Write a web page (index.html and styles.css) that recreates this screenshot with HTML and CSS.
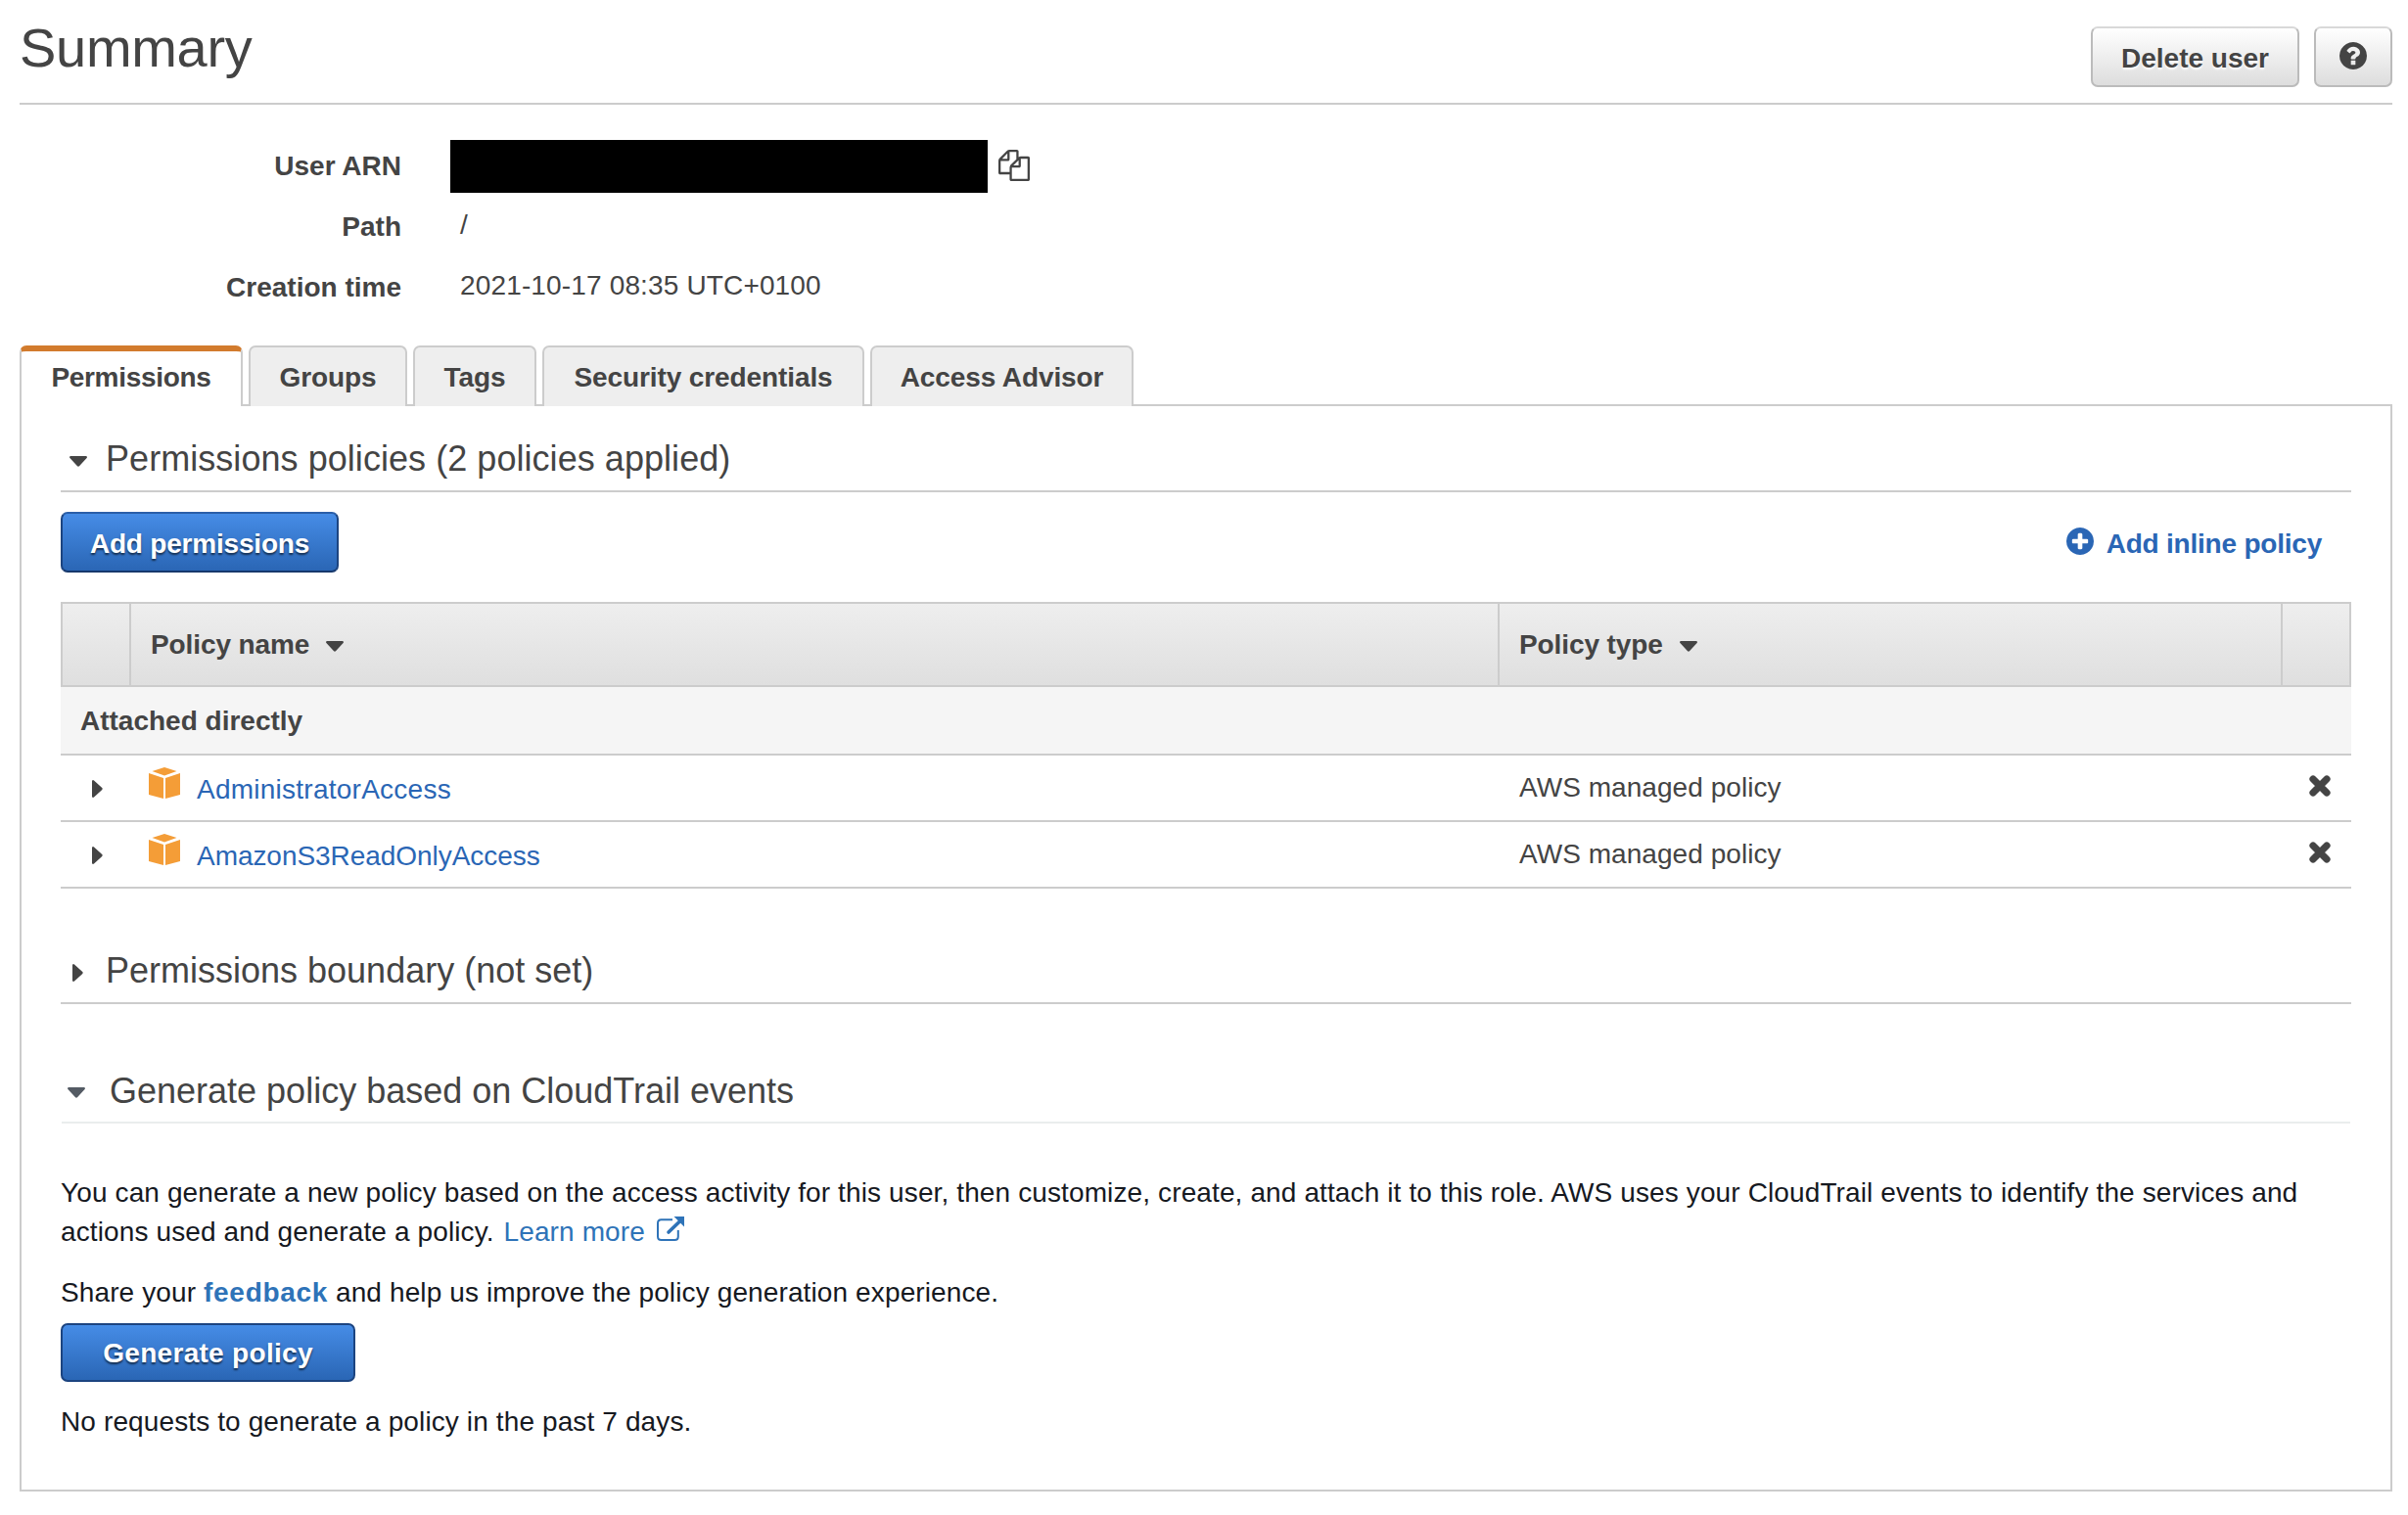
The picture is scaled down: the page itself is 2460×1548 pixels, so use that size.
FILE: index.html
```html
<!DOCTYPE html>
<html lang="en">
<head>
    <meta charset="UTF-8" />
    <title>Summary</title>
    <link rel="stylesheet" href="styles.css">
</head>
<body>
    <!-- shared icons -->
    <svg class="defs">
        <symbol id="caret-down" viewBox="0 0 18 11"><path d="M1 0h16q1.600.6.6 2L10.200 10q-1.200 1.400-2.400 0L.4 2Q-.6.6 1 0z"/></symbol>
        <symbol id="caret-right" viewBox="0 0 11 18"><path d="M0 1v16q.6 1.600 2 .6L10 10.200q1.400-1.200 0-2.400L2 .4Q.6-.6 0 1z"/></symbol>
        <symbol id="cube" viewBox="0 0 32 32">
            <path d="M3.500 4L16 0l12.500 4L16 8.500z"/>
            <path d="M0 6l15 5V32L0 28z"/>
            <path d="M32 6l-15 5V32l15-4z"/>
        </symbol>
        <symbol id="times" viewBox="0 0 22 22"><path d="M4 4l14 14M18 4L4 18" fill="none" stroke="currentColor" stroke-width="7.200" stroke-linecap="round"/></symbol>
    </svg>

    <div class="header">
        <h1>Summary</h1>
        <button class="btn delete">Delete user</button>
        <button class="btn help">
            <svg class="icon-circle" viewBox="0 0 1536 1536"><path d="M896 1248v-192q0-14-9-23t-23-9h-192q-14 0-23 9t-9 23v192q0 14 9 23t23 9h192q14 0 23-9t9-23zm256-672q0-88-55.500-163t-138.500-116-170-41q-243 0-371 213-15 24 8 42l132 100q7 6 19 6 16 0 25-12 53-68 86-92 34-24 86-24 48 0 85.500 26t37.500 59q0 38-20 61t-68 45q-63 28-115.500 86.500t-52.500 125.500v36q0 14 9 23t23 9h192q14 0 23-9t9-23q0-19 21.500-49.500t54.500-49.500q32-18 49-28.500t46-35 44.500-48 28-60.500 12.500-81zm384 192q0 209-103 385.500t-279.500 279.500-385.500 103-385.500-103-279.500-279.500-103-385.500 103-385.500 279.500-279.500 385.500-103 385.500 103 279.500 279.500 103 385.500z"/></svg>
        </button>
    </div>

    <dl class="details">
        <dt>User ARN</dt>
        <dd>
            <span class="redacted"></span>
            <svg class="copy" viewBox="0 0 1792 1792"><path d="M1696 384q40 0 68 28t28 68v1216q0 40-28 68t-68 28h-960q-40 0-68-28t-28-68v-288h-544q-40 0-68-28t-28-68v-672q0-40 20-88t48-76l408-408q28-28 76-48t88-20h416q40 0 68 28t28 68v328q68-40 128-40h416zm-544 213l-299 299h299v-299zm-640-384l-299 299h299v-299zm196 647l316-316v-416h-384v416q0 40-28 68t-68 28h-416v640h512v-256q0-40 20-88t48-76zm956 804v-1152h-384v416q0 40-28 68t-68 28h-416v640h896z"/></svg>
        </dd>
        <dt>Path</dt>
        <dd>/</dd>
        <dt>Creation time</dt>
        <dd>2021-10-17 08:35 UTC+0100</dd>
    </dl>

    <ul class="tabs">
        <li class="active"><a>Permissions</a></li>
        <li><a>Groups</a></li>
        <li><a>Tags</a></li>
        <li><a>Security credentials</a></li>
        <li><a>Access Advisor</a></li>
    </ul>

    <div class="panel">
        <h2>
            <span class="toggle"><svg class="down"><use href="#caret-down"/></svg></span>
            <span>Permissions policies (2 policies applied)</span>
        </h2>
        <div class="actions">
            <button class="btn primary add">Add permissions</button>
            <a class="inline-policy">
                <svg class="icon-circle" viewBox="0 0 1536 1536"><path d="M1216 832v-128q0-26-19-45t-45-19h-256v-256q0-26-19-45t-45-19h-128q-26 0-45 19t-19 45v256h-256q-26 0-45 19t-19 45v128q0 26 19 45t45 19h256v256q0 26 19 45t45 19h128q26 0 45-19t19-45v-256h256q26 0 45-19t19-45zm320-64q0 209-103 385.500t-279.500 279.500-385.500 103-385.500-103-279.500-279.500-103-385.500 103-385.500 279.500-279.500 385.500-103 385.500 103 279.500 279.500 103 385.500z"/></svg>
                <span>Add inline policy</span>
            </a>
        </div>

        <div class="table">
            <div class="row head">
                <div></div>
                <div><span>Policy name</span><svg class="down"><use href="#caret-down"/></svg></div>
                <div><span>Policy type</span><svg class="down"><use href="#caret-down"/></svg></div>
                <div></div>
            </div>
            <div class="group">Attached directly</div>
            <div class="row">
                <div class="expand"><svg class="right"><use href="#caret-right"/></svg></div>
                <div class="name"><svg class="cube"><use href="#cube"/></svg><a class="wide">AdministratorAccess</a></div>
                <div class="type">AWS managed policy</div>
                <div class="remove"><svg class="times"><use href="#times"/></svg></div>
            </div>
            <div class="row">
                <div class="expand"><svg class="right"><use href="#caret-right"/></svg></div>
                <div class="name"><svg class="cube"><use href="#cube"/></svg><a>AmazonS3ReadOnlyAccess</a></div>
                <div class="type">AWS managed policy</div>
                <div class="remove"><svg class="times"><use href="#times"/></svg></div>
            </div>
        </div>

        <h2 class="boundary">
            <span class="toggle"><svg class="right"><use href="#caret-right"/></svg></span>
            <span>Permissions boundary (not set)</span>
        </h2>

        <h2 class="generate">
            <span class="toggle"><svg class="down"><use href="#caret-down"/></svg></span>
            <span>Generate policy based on CloudTrail events</span>
        </h2>
        <div class="cloudtrail">
            <p>You can generate a new policy based on the access activity for this user, then customize, create, and attach it to this role. AWS uses your CloudTrail events to identify the services and<br>
            actions used and generate a policy. <a>Learn more</a><svg class="external" viewBox="0 0 30 26"><path d="M17 4.200H5.500Q2 4.200 2 7.700v13.800Q2 25 5.500 25h13.800q3.500 0 3.500-3.500V15" fill="none" stroke="currentColor" stroke-width="2"/><path d="M13 17L25 5.500" stroke="currentColor" stroke-width="3.600" stroke-linecap="round"/><path d="M18.500 1H29v10.500L25.500 8 22 4.500z"/></svg></p>
            <p class="share">Share your <b>feedback</b> and help us improve the policy generation experience.</p>
            <button class="btn primary gen">Generate policy</button>
            <p class="empty">No requests to generate a policy in the past 7 days.</p>
        </div>
    </div>
</body>
</html>
```
FILE: styles.css
```css
* {
    box-sizing: border-box;
    margin: 0;
    padding: 0;
}

body {
    padding: 0 16px 0 20px;
    background-color: #fff;
    color: #444;
    font: 28px/40px "Liberation Sans", Arial, sans-serif;
}

svg {
    display: block;
    flex: none;
    fill: currentColor;
}

.defs {
    display: none;
}

/* carets */
.down {
    width: 18px;
    height: 11px;
}

.right {
    width: 11px;
    height: 18px;
}

/* header */
.header {
    display: flex;
    align-items: flex-start;
    height: 107px;
    padding-top: 27px;
    border-bottom: 2px solid #ccc;
}

h1 {
    flex: 1;
    margin-top: -10px;
    font-size: 56px;
    font-weight: normal;
    letter-spacing: -.3px;
    line-height: 64px;
}

.btn {
    display: flex;
    align-items: center;
    justify-content: center;
    height: 62px;
    border: 2px solid #bbb;
    border-top-color: #d9d9d9;
    border-radius: 7px;
    background: linear-gradient(#fff, #ddd);
    color: #444;
    font: bold 28px/40px "Liberation Sans", Arial, sans-serif;
    text-shadow: 0 2px 2px #fff;
}

.delete {
    width: 213px;
    margin-right: 15px;
    padding-top: 3px;
}

.help {
    width: 80px;
}

.icon-circle {
    width: 28px;
    height: 28px;
}

.help .icon-circle {
    margin-bottom: 2px;
}

/* user details */
.details {
    display: grid;
    grid-template-columns: 390px 1fr;
    grid-auto-rows: 62px;
    column-gap: 60px;
    align-items: center;
    margin-top: 32px;
}

dt {
    padding-bottom: 1px;
    font-weight: bold;
    text-align: right;
}

dd {
    padding-bottom: 4px;
    letter-spacing: .15px;
}

dd:first-of-type {
    display: flex;
    align-items: center;
    gap: 11px;
    margin-left: -10px;
    padding: 0;
}

.redacted {
    width: 549px;
    height: 54px;
    background-color: #000;
}

.copy {
    width: 32px;
    height: 32px;
    margin-bottom: 2px;
}

/* tabs */
.tabs {
    display: grid;
    grid-template-columns: 228px 162px 126px 329px 269px;
    column-gap: 6px;
    height: 60px;
    margin-top: 28px;
    list-style: none;
}

.tabs li {
    padding-top: 11px;
    border: 2px solid #ccc;
    border-bottom: none;
    border-radius: 7px 7px 0 0;
    background-color: #eee;
    font-weight: bold;
    letter-spacing: -.1px;
    text-align: center;
}

.tabs .active {
    height: 62px;                 /* covers the top border of the panel */
    padding-top: 7px;
    border-top: 6px solid #d27b2d;
    background-color: #fff;
    letter-spacing: -.3px;
    z-index: 1;
}

.panel {
    height: 1111px;
    padding: 32px 40px 0;
    border: 2px solid #ccc;
}

h2 {
    display: flex;
    align-items: center;
    height: 56px;
    padding-bottom: 10px;
    border-bottom: 2px solid #ccc;
    font-size: 36px;
    font-weight: normal;
    letter-spacing: .05px;
    line-height: 44px;
}

.toggle {
    width: 46px;
    padding: 4px 0 0 9px;
}

.actions {
    display: flex;
    justify-content: space-between;
    margin: 20px 30px 30px 0;
}

.primary {
    border-color: #2a5ea8 #1c4480 #16386c;
    background: linear-gradient(#468ce6, #2a66b5);
    color: #fff;
    text-shadow: 0 2px 2px rgba(0, 0, 0, .6);
}

.add {
    width: 284px;
    padding-top: 3px;
    letter-spacing: -.2px;
}

.inline-policy {
    display: flex;
    align-items: center;
    gap: 13px;
    color: #2a66b5;
    font-weight: bold;
    letter-spacing: -.22px;
}

.inline-policy .icon-circle {
    margin-bottom: 2px;
}

.inline-policy span {
    padding-top: 3px;
}

/* policies table */
.row {
    display: grid;
    grid-template-columns: 70px 1398px 800px 72px;
    height: 68px;
    border-bottom: 2px solid #ccc;
}

.head {
    height: 87px;
    border: 2px solid #ccc;
    background: linear-gradient(#eee, #dfdfdf);
    font-weight: bold;
    letter-spacing: -.1px;
    grid-template-columns: 68px 1398px 800px 70px;
}

.head div {
    display: flex;
    align-items: center;
    gap: 17px;
    padding: 1px 0 0 20px;
    border-left: 2px solid #ccc;
}

.head div:first-child {
    border: none;
}

.head .down {
    margin-top: 3px;
}

.group {
    height: 70px;
    padding: 15px 0 0 20px;
    border-bottom: 2px solid #ccc;
    background-color: #f5f5f5;
    font-weight: bold;
}

.expand {
    padding: 25px 0 0 32px;
}

.name {
    display: flex;
    gap: 17px;
    padding: 12px 0 0 20px;
}

.name a {
    padding-top: 3px;
    color: #2a66b5;
    letter-spacing: -.05px;
}

.name .wide {
    letter-spacing: .25px;
}

.cube {
    width: 32px;
    height: 32px;
    color: #f49d37;
}

.type {
    padding: 13px 0 0 22px;
    letter-spacing: .05px;
}

.times {
    width: 22px;
    height: 22px;
    margin: 20px 0 0 29px;
}

.boundary {
    margin-top: 62px;
    letter-spacing: 0;
}

.boundary .toggle {
    padding-left: 12px;
}

.generate {
    margin: 66px 1px 0;
    padding-bottom: 8px;
    border-color: #eaeded;
    letter-spacing: 0;
}

.generate .toggle {
    width: 49px;
    padding: 3px 0 0 6px;
    color: #545b64;
}

.cloudtrail {
    padding-top: 51px;
    color: #16191f;
    letter-spacing: .12px;
}

.cloudtrail a,
.cloudtrail b {
    color: #2e73b8;
}

.cloudtrail a {
    margin-left: 2px;
}

.cloudtrail b {
    letter-spacing: .7px;
}

.external {
    display: inline-block;
    width: 30px;
    height: 26px;
    margin-left: 11px;
    color: #2e73b8;
}

.share {
    margin-top: 22px;
}

.gen {
    width: 301px;
    height: 60px;
    margin-top: 11px;
    padding-top: 1px;
    border-color: #1c4480;
    letter-spacing: .3px;
}

.empty {
    margin-top: 21px;
}
```
